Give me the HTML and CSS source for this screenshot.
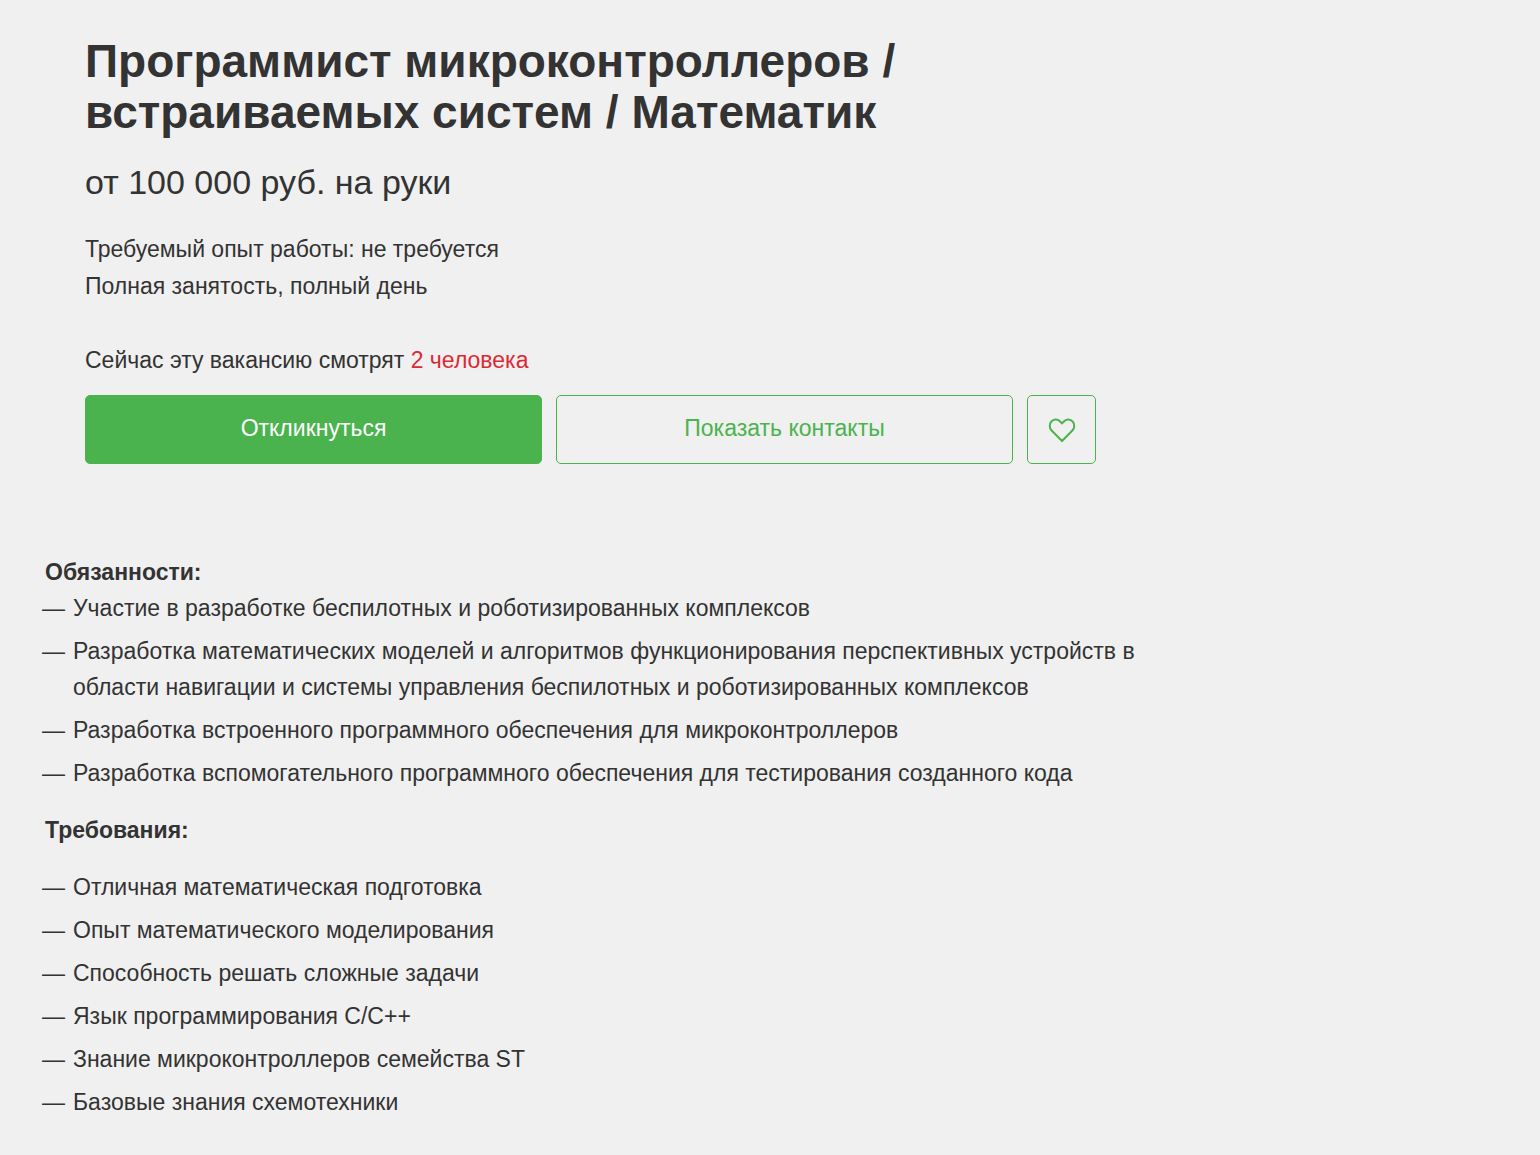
FILE: index.html
```html
<!DOCTYPE html>
<html lang="ru">
<head>
    <meta charset="UTF-8">
    <meta name="viewport" content="width=device-width, initial-scale=1.0">
    <title>Программист микроконтроллеров</title>
    <link rel="stylesheet" href="styles.css">
</head>
<body>
    <main class="vacancy">
        <header class="vacancy-header">
            <h1>Программист микроконтроллеров / встраиваемых систем / Математик</h1>
            <p class="salary">от 100 000 руб. на руки</p>
            <p>Требуемый опыт работы: не требуется</p>
            <p>Полная занятость, полный день</p>
            <p class="viewers">Сейчас эту вакансию смотрят <span class="viewers-count">2 человека</span></p>
            <div class="actions">
                <button class="btn btn-primary">Откликнуться</button>
                <button class="btn">Показать контакты</button>
                <button class="btn btn-heart" aria-label="В избранное">
                    <svg width="28" height="26" viewBox="0 0 28 26" fill="none" stroke="currentColor" stroke-width="2">
                        <path d="M14 24 L3.400 13.200 C1.300 11 1.200 7 3.200 4.600 C5.600 1.900 9.300 1.800 11.600 4 L14 6.400 L16.400 4 C18.700 1.800 22.400 1.900 24.800 4.600 C26.800 7 26.700 11 24.600 13.200 Z"/>
                    </svg>
                </button>
            </div>
        </header>
        <section class="description">
            <h2>Обязанности:</h2>
            <ul class="list">
                <li>Участие в разработке беспилотных и роботизированных комплексов</li>
                <li>Разработка математических моделей и алгоритмов функционирования перспективных устройств в области навигации и системы управления беспилотных и роботизированных комплексов</li>
                <li>Разработка встроенного программного обеспечения для микроконтроллеров</li>
                <li>Разработка вспомогательного программного обеспечения для тестирования созданного кода</li>
            </ul>
            <h2>Требования:</h2>
            <ul class="list list-requirements">
                <li>Отличная математическая подготовка</li>
                <li>Опыт математического моделирования</li>
                <li>Способность решать сложные задачи</li>
                <li>Язык программирования C/C++</li>
                <li>Знание микроконтроллеров семейства ST</li>
                <li>Базовые знания схемотехники</li>
            </ul>
        </section>
    </main>
</body>
</html>
```
FILE: styles.css
```css
*{
    margin: 0;
    padding: 0;
    box-sizing: border-box;
}
body{
    background-color: #f0f0f0;
    color: #333;
    font-family: "Liberation Sans", Arial, sans-serif;
    font-size: 23px;
    line-height: 37px;
}
.vacancy{
    max-width: 1140px;
    padding: 36px 0 32px 42px;
}
.vacancy-header{
    padding: 0 44px 0 43px;
}
h1{
    max-width: 900px;
    font-size: 46px;
    line-height: 51px;
}
.salary{
    margin: 19px 0 24px;
    font-size: 34px;
    line-height: 50px;
}
.viewers{
    margin-top: 37px;
}
.viewers-count{
    color: #dc2a34;
}
.actions{
    display: flex;
    gap: 14px;
    margin-top: 16px;
}
.btn{
    flex: 1;
    height: 69px;
    padding-bottom: 2px;
    border: 1px solid #4bb34e;
    border-radius: 5px;
    background: none;
    color: #4bb34e;
    font: inherit;
    cursor: pointer;
}
.btn-primary{
    background-color: #4bb34e;
    color: #fff;
}
.btn-heart{
    display: flex;
    flex: 0 0 69px;
    align-items: center;
    justify-content: center;
    padding: 0;
}
.description{
    margin-top: 90px;
    line-height: 36px;
}
h2{
    padding-left: 3px;
    font-size: 23px;
}
.list{
    margin-bottom: 21px;
    list-style: none;
}
.list-requirements{
    margin-top: 21px;
}
.list li{
    display: flex;
    gap: 8px;
    margin-bottom: 7px;
}
.list li::before{
    content: "—";
}
```
